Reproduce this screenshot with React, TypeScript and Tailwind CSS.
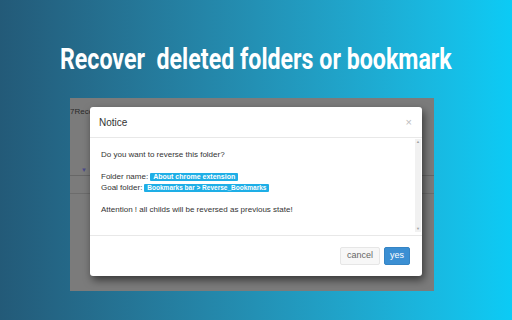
export default function App() {
  return (
    <div className="w-[512px] h-[320px] overflow-hidden flex flex-col bg-gradient-to-r from-[#235a78] to-[#0bcbf5] font-['Liberation_Sans',Arial,sans-serif]">
      {/* Headline */}
      <div className="h-[98px] flex items-start justify-center pt-[42px]">
        <h1 className="whitespace-pre text-white text-[29px] leading-[34px] font-bold scale-x-[0.8] font-['Roboto','Liberation_Sans',sans-serif]">
          Recover  deleted folders or bookmark
        </h1>
      </div>

      {/* Dimmed page screenshot */}
      <div className="relative ml-[70px] w-[364px] h-[193px] bg-[#7b7b7b] overflow-hidden">
        <div className="pt-[9px] text-[8px] leading-[10px] text-[#2a2a2a]">7Recei</div>
        <div className="ml-[11px] mt-[49px] text-[6px] text-[#4a4a8a]">▼</div>
        <div className="mt-[0px] border-t border-[#676767]" />
        <div className="mt-[17px] border-t border-[#6c6c6c]" />

        {/* Modal */}
        <div className="absolute left-[20px] top-[9px] w-[332px] h-[169px] bg-white rounded-[3px] shadow-[2px_4px_8px_rgba(0,0,0,0.55)] flex flex-col">
          <div className="h-[31px] flex items-center justify-between pl-[9px] pr-[10px] border-b border-[#e8e8e8]">
            <span className="text-[10px] text-[#333]">Notice</span>
            <span className="text-[11px] leading-none text-[#bdbdbd]">×</span>
          </div>

          <div className="h-[97px] flex">
            <div className="flex-1 pl-[11px] pt-[11px] text-[8px] leading-[11px] text-[#333]">
              <div>Do you want to reverse this folder?</div>
              <div className="h-[11px]" />
              <div className="flex items-center gap-[2px]">
                <span>Folder name:</span>
                <span className="bg-[#1eaee6] text-white font-bold text-[7px] leading-[8px] px-[3px] rounded-[1px]">About chrome extension</span>
              </div>
              <div className="flex items-center gap-[2px]">
                <span>Goal folder:</span>
                <span className="bg-[#1eaee6] text-white font-bold text-[6.5px] leading-[8px] px-[3px] rounded-[1px]">Bookmarks bar &gt; Reverse_Bookmarks</span>
              </div>
              <div className="h-[11px]" />
              <div>Attention ! all childs will be reversed as previous state!</div>
            </div>
            <div className="w-[6px] mr-[1px] mt-[1px] mb-[3px] bg-[#f1f1f1] flex flex-col justify-between items-center text-[4px] leading-[6px] text-[#a0a0a0]">
              <span>▲</span>
              <span>▼</span>
            </div>
          </div>

          <div className="flex-1 border-t border-[#e8e8e8] flex items-start justify-end gap-[4px] pr-[12px] pt-[11px]">
            <button className="h-[18px] px-[6px] bg-[#f7f7f7] border border-[#e6e6e6] rounded-[2px] text-[9px] text-[#666]">cancel</button>
            <button className="h-[18px] px-[5px] bg-[#3b8fd3] border border-[#3584c4] rounded-[2px] text-[9px] text-white">yes</button>
          </div>
        </div>
      </div>
    </div>
  );
}
